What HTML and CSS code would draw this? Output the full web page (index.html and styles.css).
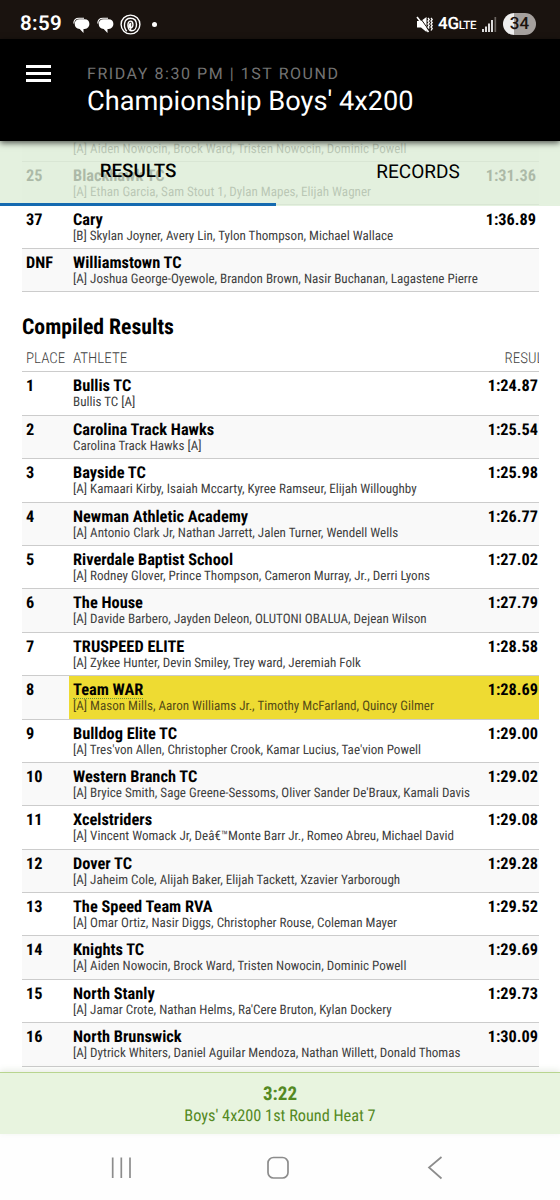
FILE: index.html
```html
<!DOCTYPE html>
<html lang="en">
<head>
<meta charset="utf-8">
<meta name="viewport" content="width=device-width">
<title>Championship Boys' 4x200</title>
<link rel="stylesheet" href="styles.css">
</head>
<body>
<div class="status">
  <span class="clock">8:59</span>
  <svg class="chat" viewBox="0 0 17 17" width="17" height="17"><path d="M.8 6.500C.8 3 3 1.200 6 1.200h5" fill="none" stroke="#fff" stroke-width="1.100"/><path d="M6.500 2.300h5c3.200 0 4.900 1.900 4.900 4.600 0 2.700-1.600 4.600-4.700 5H10.500V16l-3.800-4.100C3.600 11.700 1.700 9.700 1.700 7c0-2.900 1.900-4.700 4.800-4.700z" fill="#fff"/></svg>
  <svg class="chat second" viewBox="0 0 17 17" width="17" height="17"><path d="M.8 6.500C.8 3 3 1.200 6 1.200h5" fill="none" stroke="#fff" stroke-width="1.100"/><path d="M6.500 2.300h5c3.200 0 4.900 1.900 4.900 4.600 0 2.700-1.600 4.600-4.700 5H10.500V16l-3.800-4.100C3.600 11.700 1.700 9.700 1.700 7c0-2.900 1.900-4.700 4.800-4.700z" fill="#fff"/></svg>
  <svg class="spiral" viewBox="0 0 21 21" width="21" height="21" fill="none" stroke="#fff" stroke-width="1.400"><circle cx="10.500" cy="10.500" r="9.400"/><path d="M6.800 17.200C3.500 13.800 3 4.200 10.500 4.200c4.200 0 6 3 6 6.400 0 3.500-2 6.200-4.800 6.200-4.400 0-5.200-9.700-1.200-9.700 3.200 0 3.200 6.900.2 6.900-1.700 0-1.700-4.500-.1-4.500v7.800"/></svg>
  <span class="dot"></span>
  <span class="grow"></span>
  <svg class="mute" viewBox="0 0 17 17" width="17" height="17"><path d="M1 5h4L10.500 1v15L5 11.500H1z" fill="#fff"/><path d="M2.800 0l10 14" stroke="#1a130f" stroke-width="1"/><path d="M1 1l11.500 15" stroke="#fff" stroke-width="1.600"/><path d="M12 2l1.200 1.500L12 5l1.200 1.500L12 8l1.200 1.500L12 11l1.200 1.500M15 2l1.200 1.500L15 5l1.200 1.500L15 8l1.200 1.500L15 11l1.200 1.500L15 14.500" fill="none" stroke="#fff" stroke-width="1.300"/></svg>
  <span class="net">4G<small>LTE</small></span>
  <svg class="signal" viewBox="0 0 15 16" width="15" height="16"><path d="M1 13v3M4 10.500V16M7 7.500V16M10 4v12" stroke="#fff" stroke-width="1.700"/><path d="M13.300 1v15" stroke="#6a6460" stroke-width="1.700"/></svg>
  <span class="battery">34</span>
</div>
<header class="header">
  <div class="burger"><i></i><i></i><i></i></div>
  <div class="heading">
    <p class="eyebrow">FRIDAY 8:30 PM | 1ST ROUND</p>
    <h1>Championship Boys' 4x200</h1>
  </div>
</header>
<main class="content">
  <nav class="tabs"><span class="tab active">RESULTS</span><span class="tab">RECORDS</span></nav>
  <section class="table heat">
    <div class="row alt"><b></b><div class="who"><h3>&nbsp;</h3><p>[A] Aiden Nowocin, Brock Ward, Tristen Nowocin, Dominic Powell</p></div><b class="time"></b></div>
    <div class="row alt"><b>25</b><div class="who"><h3>Blackhawk TC</h3><p>[A] Ethan Garcia, Sam Stout 1, Dylan Mapes, Elijah Wagner</p></div><b class="time">1:31.36</b></div>
    <div class="row"><b>37</b><div class="who"><h3>Cary</h3><p>[B] Skylan Joyner, Avery Lin, Tylon Thompson, Michael Wallace</p></div><b class="time">1:36.89</b></div>
    <div class="row alt"><b>DNF</b><div class="who"><h3>Williamstown TC</h3><p>[A] Joshua George-Oyewole, Brandon Brown, Nasir Buchanan, Lagastene Pierre</p></div><b class="time"></b></div>
  </section>
  <h2>Compiled Results</h2>
  <section class="table compiled">
    <div class="head"><span>PLACE</span><span>ATHLETE</span><span class="result">RESULT</span></div>
    <div class="row"><b>1</b><div class="who"><h3>Bullis TC</h3><p>Bullis TC [A]</p></div><b class="time">1:24.87</b></div>
    <div class="row alt"><b>2</b><div class="who"><h3>Carolina Track Hawks</h3><p>Carolina Track Hawks [A]</p></div><b class="time">1:25.54</b></div>
    <div class="row"><b>3</b><div class="who"><h3>Bayside TC</h3><p>[A] Kamaari Kirby, Isaiah Mccarty, Kyree Ramseur, Elijah Willoughby</p></div><b class="time">1:25.98</b></div>
    <div class="row alt"><b>4</b><div class="who"><h3>Newman Athletic Academy</h3><p>[A] Antonio Clark Jr, Nathan Jarrett, Jalen Turner, Wendell Wells</p></div><b class="time">1:26.77</b></div>
    <div class="row"><b>5</b><div class="who"><h3>Riverdale Baptist School</h3><p>[A] Rodney Glover, Prince Thompson, Cameron Murray, Jr., Derri Lyons</p></div><b class="time">1:27.02</b></div>
    <div class="row alt"><b>6</b><div class="who"><h3>The House</h3><p>[A] Davide Barbero, Jayden Deleon, OLUTONI OBALUA, Dejean Wilson</p></div><b class="time">1:27.79</b></div>
    <div class="row"><b>7</b><div class="who"><h3>TRUSPEED ELITE</h3><p>[A] Zykee Hunter, Devin Smiley, Trey ward, Jeremiah Folk</p></div><b class="time">1:28.58</b></div>
    <div class="row alt marked"><b>8</b><div class="who"><h3>Team WAR</h3><p>[A] Mason Mills, Aaron Williams Jr., Timothy McFarland, Quincy Gilmer</p></div><b class="time">1:28.69</b></div>
    <div class="row"><b>9</b><div class="who"><h3>Bulldog Elite TC</h3><p>[A] Tres'von Allen, Christopher Crook, Kamar Lucius, Tae'vion Powell</p></div><b class="time">1:29.00</b></div>
    <div class="row alt"><b>10</b><div class="who"><h3>Western Branch TC</h3><p>[A] Bryice Smith, Sage Greene-Sessoms, Oliver Sander De'Braux, Kamali Davis</p></div><b class="time">1:29.02</b></div>
    <div class="row"><b>11</b><div class="who"><h3>Xcelstriders</h3><p>[A] Vincent Womack Jr, Deâ€™Monte Barr Jr., Romeo Abreu, Michael David</p></div><b class="time">1:29.08</b></div>
    <div class="row alt"><b>12</b><div class="who"><h3>Dover TC</h3><p>[A] Jaheim Cole, Alijah Baker, Elijah Tackett, Xzavier Yarborough</p></div><b class="time">1:29.28</b></div>
    <div class="row"><b>13</b><div class="who"><h3>The Speed Team RVA</h3><p>[A] Omar Ortiz, Nasir Diggs, Christopher Rouse, Coleman Mayer</p></div><b class="time">1:29.52</b></div>
    <div class="row alt"><b>14</b><div class="who"><h3>Knights TC</h3><p>[A] Aiden Nowocin, Brock Ward, Tristen Nowocin, Dominic Powell</p></div><b class="time">1:29.69</b></div>
    <div class="row"><b>15</b><div class="who"><h3>North Stanly</h3><p>[A] Jamar Crote, Nathan Helms, Ra'Cere Bruton, Kylan Dockery</p></div><b class="time">1:29.73</b></div>
    <div class="row alt"><b>16</b><div class="who"><h3>North Brunswick</h3><p>[A] Dytrick Whiters, Daniel Aguilar Mendoza, Nathan Willett, Donald Thomas</p></div><b class="time">1:30.09</b></div>
  </section>
</main>
<footer class="next"><strong>3:22</strong><span>Boys' 4x200 1st Round Heat 7</span></footer>
<div class="sysnav">
  <svg viewBox="0 0 560 66" width="560" height="66" fill="none" stroke="#8c8c8c" stroke-width="1.700"><path d="M112.700 23.500v20.500M121.300 23.500v20.500M130 23.500v20.500"/><rect x="268" y="23.500" width="20" height="20.500" rx="5.500"/><path d="M441.500 23L429 33.500 441.500 44.500"/></svg>
</div>
</body>
</html>
```
FILE: styles.css
```css
* { box-sizing: border-box; }
body { margin: 0; width: 560px; height: 1200px; overflow: hidden; display: flex; flex-direction: column; background: #fff; color: #000; font-family: "Roboto Condensed", Roboto, sans-serif; font-stretch: 75%; text-rendering: geometricPrecision; }
h1, h2, h3, p { margin: 0; font-weight: 400; }
.status { flex: none; height: 39px; padding: 9px 24px 0 20px; display: flex; align-items: center; background: #1a130f; color: #fff; font-family: Roboto, sans-serif; font-stretch: 100%; }
.clock { width: 53px; font-size: 20.500px; font-weight: 600; letter-spacing: .3px; }
.chat { margin-top: 2px; }
.chat.second { margin-left: 7px; }
.spiral { margin-left: 6px; }
.dot { width: 5px; height: 5px; margin-left: 11px; border-radius: 50%; background: #fff; }
.grow { flex: 1; }
.net { width: 41px; margin-left: 5px; font-size: 17px; font-weight: 600; letter-spacing: -.3px; white-space: nowrap; }
.net small { font-size: 11.500px; font-weight: 500; letter-spacing: -.2px; }
.signal { margin-left: 3px; }
.battery { width: 33px; height: 22px; margin-left: 6px; border-radius: 11px; background: linear-gradient(90deg, #eee 11px, #a5a09d 11px); color: #1a130f; font-size: 17px; font-weight: 500; line-height: 23px; text-align: center; }
.header { flex: none; position: relative; z-index: 3; height: 102px; padding: 24px 0 0 26px; display: flex; align-items: flex-start; background: #000; color: #fff; font-family: Roboto, sans-serif; font-stretch: 100%; box-shadow: 0 2px 6px rgba(0,0,0,.65); }
.burger { width: 61px; padding-top: 2px; display: flex; flex-direction: column; gap: 4.500px; }
.burger i { width: 25px; height: 2.700px; background: #fff; }
.eyebrow { color: #737373; font-size: 16px; line-height: 22px; letter-spacing: 1.550px; white-space: nowrap; }
.heading h1 { font-size: 27.200px; line-height: 32px; white-space: nowrap; }
.content { flex: none; position: relative; height: 931px; overflow: hidden; }
.tabs { position: absolute; z-index: 2; inset: 0 0 auto; height: 65px; display: flex; background: rgba(220,237,214,.78); font-family: Roboto, sans-serif; font-stretch: 100%; }
.tab { flex: 1; padding-top: 19px; font-size: 19px; line-height: 23px; text-align: center; }
.tab.active { flex: 0 0 276px; font-size: 18.800px; font-weight: 500; border-bottom: 3px solid #156ab0; }
.table { width: 517px; margin-left: 22px; overflow: hidden; }
.heat { margin-top: -23px; }
.row { height: 43.400px; display: grid; grid-template-columns: 47px 1fr 55px; border-bottom: 1px solid #ccc; font-size: 16.300px; line-height: 20px; }
.heat .row { height: 43.600px; }
.row > b { padding: 4px 0 0 4px; }
.row.alt { background: #f9f9f9; }
.who { padding: 4px 0 0 4px; white-space: nowrap; }
.who h3 { font-size: 16.350px; font-weight: 700; line-height: 19px; }
.who p { color: #404040; font-size: 13.080px; line-height: 16px; }
.row > .time { padding: 4px 1px 0 0; text-align: right; }
.heat .row > .time { padding-right: 3px; }
.heat .who, .heat .row > b { padding-top: 4.500px; }
.marked .who, .marked .time { background: #eedb32; }
.marked .who h3 { width: max-content; height: 19px; border-bottom: 1px dotted #659a35; }
.marked .who p { color: #564c15; }
h2 { height: 53px; padding: 23px 0 0 22px; font-size: 21.700px; font-weight: 700; line-height: 26px; }
.head { height: 27px; display: grid; grid-template-columns: 47px 435px 1fr; padding: 3px 0 0 4px; border-bottom: 1px solid #ccc; color: #444; font-size: 15px; font-weight: 300; line-height: 20px; }
.result { margin-left: -3.500px; }
.next { flex: none; height: 62px; padding-top: 10px; display: flex; flex-direction: column; align-items: center; border-top: 1px solid #b8d58f; background: #e8f4df; color: #548923; box-shadow: 0 -2px 6px rgba(100,130,80,.15); position: relative; }
.next strong { font-size: 19px; line-height: 22px; }
.next span { font-size: 16.300px; line-height: 21px; }
.sysnav { height: 66px; background: #fefefe; }
.sysnav svg { display: block; }
```
